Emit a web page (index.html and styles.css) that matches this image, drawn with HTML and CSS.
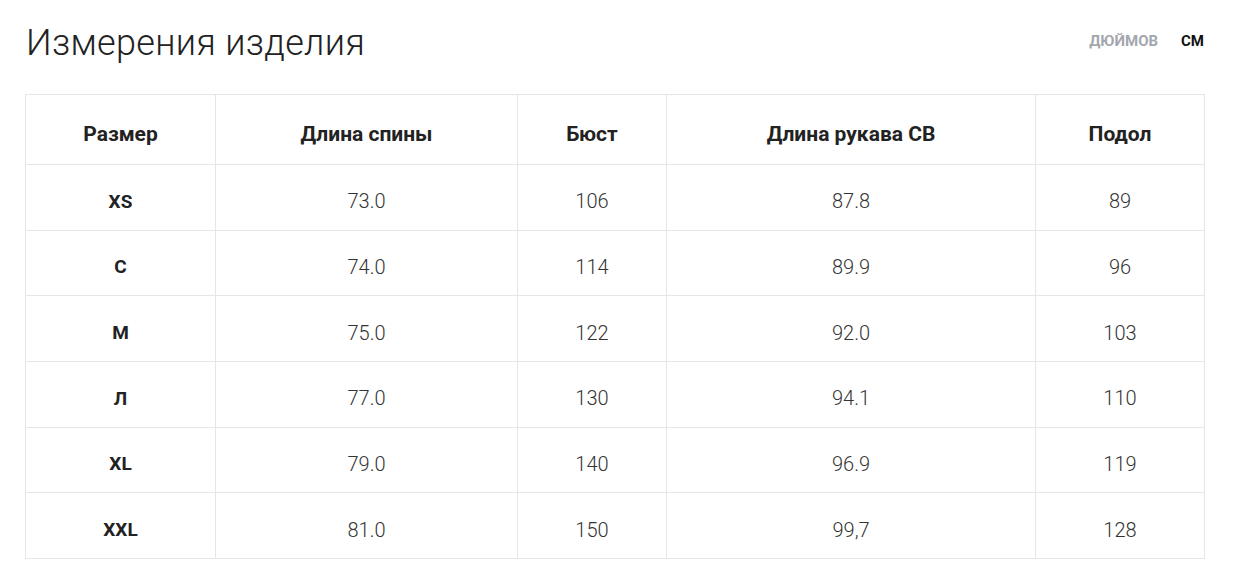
FILE: index.html
```html
<!DOCTYPE html>
<html lang="ru">
<head>
<meta charset="utf-8">
<link rel="stylesheet" href="styles.css">
</head>
<body>
<div class="page">
  <div class="head">
    <h1 class="title">Измерения изделия</h1>
    <div class="units">
      <span class="unit off">ДЮЙМОВ</span>
      <span class="unit on">СМ</span>
    </div>
  </div>
  <table class="sizes">
    <colgroup>
      <col class="c1"><col class="c2"><col class="c3"><col class="c4"><col class="c5">
    </colgroup>
    <thead>
      <tr><th>Размер</th><th>Длина спины</th><th>Бюст</th><th>Длина рукава СВ</th><th>Подол</th></tr>
    </thead>
    <tbody>
      <tr><th>XS</th><td>73.0</td><td>106</td><td>87.8</td><td>89</td></tr>
      <tr><th>С</th><td>74.0</td><td>114</td><td>89.9</td><td>96</td></tr>
      <tr><th>М</th><td>75.0</td><td>122</td><td>92.0</td><td>103</td></tr>
      <tr><th>Л</th><td>77.0</td><td>130</td><td>94.1</td><td>110</td></tr>
      <tr><th>XL</th><td>79.0</td><td>140</td><td>96.9</td><td>119</td></tr>
      <tr><th>XXL</th><td>81.0</td><td>150</td><td>99,7</td><td>128</td></tr>
    </tbody>
  </table>
</div>
</body>
</html>
```
FILE: styles.css
```css
html, body {
  margin: 0;
  padding: 0;
  background: #fff;
}
body {
  font-family: Roboto, "Noto Sans", sans-serif;
  color: #222;
}
.page {
  width: 1179px;
  padding: 0 0 0 25px;
}
.head {
  display: flex;
  justify-content: space-between;
  align-items: flex-start;
  height: 94px;
}
.title {
  margin: 21px 0 0 1px;
  font-size: 36px;
  font-weight: 300;
  line-height: 44px;
  color: #222;
  letter-spacing: 0.3px;
}
.units {
  display: flex;
  gap: 23px;
  margin-top: 32px;
}
.unit {
  font-size: 15px;
  font-weight: 700;
  line-height: 18px;
}
.unit.off { color: #a3a7ad; }
.unit.on { color: #111; }
.sizes {
  border-collapse: collapse;
  width: 1179px;
  table-layout: fixed;
}
.c1 { width: 190px; }
.c2 { width: 302px; }
.c3 { width: 149px; }
.c4 { width: 369px; }
.c5 { width: 169px; }
.sizes th, .sizes td {
  border: 1px solid #e6e6e8;
  text-align: center;
  padding: 8px 0 0;
}
.sizes thead th {
  height: 61px;
  font-size: 21px;
  font-weight: 700;
  color: #222;
}
.sizes tbody tr {
  height: 65.67px;
}
.sizes tbody th {
  font-size: 19px;
  font-weight: 700;
  color: #222;
}
.sizes td {
  font-size: 20px;
  font-weight: 300;
  color: #333;
}
```
